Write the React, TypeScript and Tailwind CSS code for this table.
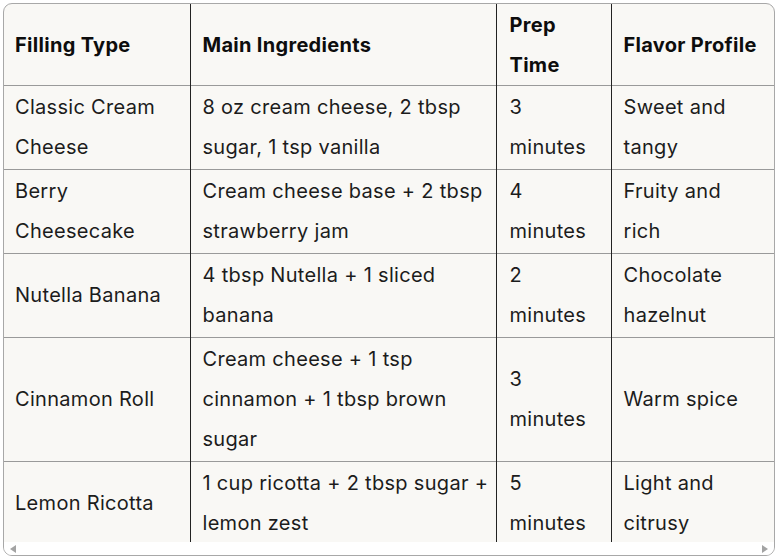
import React from "react";

const rows: [string, string, string, string][] = [
  ["Classic Cream Cheese", "8 oz cream cheese, 2 tbsp sugar, 1 tsp vanilla", "3 minutes", "Sweet and tangy"],
  ["Berry Cheesecake", "Cream cheese base + 2 tbsp strawberry jam", "4 minutes", "Fruity and rich"],
  ["Nutella Banana", "4 tbsp Nutella + 1 sliced banana", "2 minutes", "Chocolate hazelnut"],
  ["Cinnamon Roll", "Cream cheese + 1 tsp cinnamon + 1 tbsp brown sugar", "3 minutes", "Warm spice"],
  ["Lemon Ricotta", "1 cup ricotta + 2 tbsp sugar + lemon zest", "5 minutes", "Light and citrusy"],
];

export default function App() {
  return (
    <div className="p-[3px] bg-white" style={{ fontFamily: "Inter, 'Noto Sans', sans-serif" }}>
      <div className="h-[553px] w-[772px] border border-[#a8a8a8] rounded-[9px] overflow-hidden flex flex-col bg-[#f9f8f5]">
        <div className="flex-1 overflow-hidden">
          <table className="table-fixed border-collapse w-[771px] text-[20px] tracking-[0.3px] leading-[40px] text-[#1c1c1c]">
            <colgroup>
              <col className="w-[186px]" />
              <col className="w-[306px]" />
              <col className="w-[115px]" />
              <col className="w-[164px]" />
            </colgroup>
            <thead>
              <tr className="border-b border-[#9a9a9a]">
                <th className="text-left font-bold text-[#0d0d0d] align-middle pl-[11px] pr-1 pt-[1px] pb-0 border-r border-r-[#222]">Filling Type</th>
                <th className="text-left font-bold text-[#0d0d0d] align-middle pl-[12px] pr-1 pt-[1px] pb-0 border-r border-r-[#222]">Main Ingredients</th>
                <th className="text-left font-bold text-[#0d0d0d] align-middle pl-[13px] pr-2 pt-[1px] pb-0 border-r border-r-[#222]">Prep Time</th>
                <th className="text-left font-bold text-[#0d0d0d] align-middle pl-[12px] pr-[15px] pt-[1px] pb-0">Flavor Profile</th>
              </tr>
            </thead>
            <tbody>
              {rows.map((r, i) => (
                <tr key={i} className="border-b border-[#9a9a9a]">
                  <td className="align-middle pl-[11px] pr-1 pt-[1px] pb-[2px] border-r border-r-[#222]">{r[0]}</td>
                  <td className="align-middle pl-[12px] pr-1 pt-[1px] pb-[2px] border-r border-r-[#222]">{r[1]}</td>
                  <td className="align-middle pl-[13px] pr-2 pt-[1px] pb-[2px] border-r border-r-[#222]">{r[2]}</td>
                  <td className="align-middle pl-[12px] pr-[15px] pt-[1px] pb-[2px]">{r[3]}</td>
                </tr>
              ))}
            </tbody>
          </table>
        </div>
        <div className="h-[13px] bg-white flex items-center justify-between px-[6px] shrink-0">
          <div className="w-0 h-0 border-y-[4px] border-y-transparent border-r-[6px] border-r-[#a3a3a3]" />
          <div className="w-0 h-0 border-y-[4px] border-y-transparent border-l-[6px] border-l-[#a3a3a3]" />
        </div>
      </div>
    </div>
  );
}
